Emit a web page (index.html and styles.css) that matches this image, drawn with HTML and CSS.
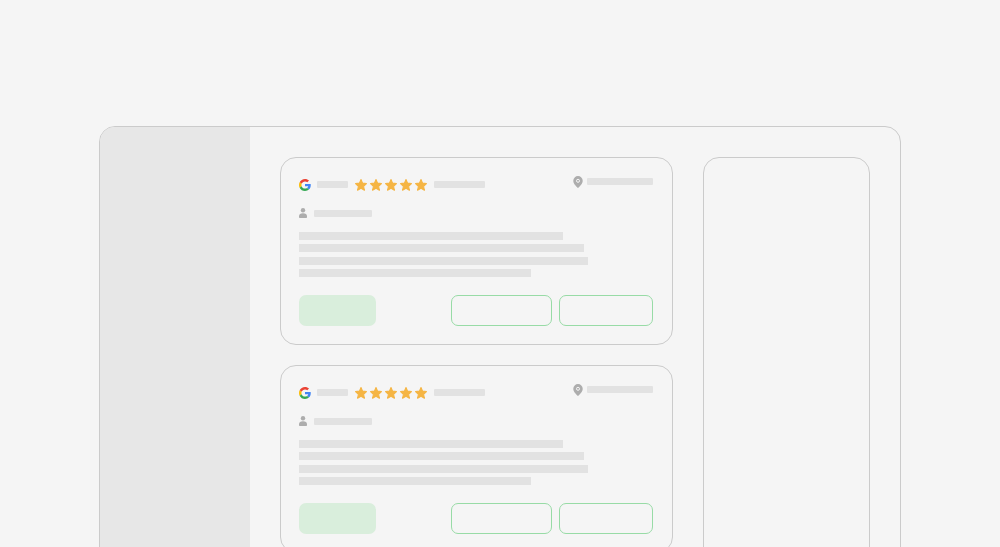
FILE: index.html
```html
<!DOCTYPE html>
<html lang="en">

<head>
    <title>Reviews</title>
    <meta charset="utf-8">
    <meta name="viewport" content="width=device-width, initial-scale=1.0">
    <link rel="stylesheet" href="styles.css">
</head>

<body>
    <svg class="symbols" aria-hidden="true">
        <symbol id="google" viewBox="0 0 48 48">
            <path fill="#ea4335" d="M24 9.5c3.54 0 6.71 1.22 9.21 3.6l6.85-6.85C35.9 2.38 30.47 0 24 0 14.62 0 6.51 5.38 2.56 13.22l7.98 6.19C12.43 13.72 17.74 9.5 24 9.5z" />
            <path fill="#4285f4" d="M46.98 24.55c0-1.57-.15-3.09-.38-4.55H24v9.02h12.94c-.58 2.96-2.26 5.48-4.78 7.18l7.73 6c4.51-4.18 7.09-10.36 7.09-17.65z" />
            <path fill="#fbbc05" d="M10.53 28.59c-.48-1.45-.76-2.99-.76-4.59s.27-3.14.76-4.59l-7.98-6.19C.92 16.46 0 20.12 0 24c0 3.88.92 7.54 2.56 10.78l7.97-6.19z" />
            <path fill="#34a853" d="M24 48c6.48 0 11.93-2.13 15.89-5.81l-7.73-6c-2.15 1.45-4.92 2.3-8.16 2.3-6.26 0-11.57-4.22-13.47-9.91l-7.98 6.19C6.51 42.62 14.62 48 24 48z" />
        </symbol>
        <symbol id="star" viewBox="0.500 0.500 23 23">
            <path fill="#f5b544" stroke="#f5b544" stroke-width="2" stroke-linejoin="round" d="M12 1.500l3.100 6.900 7.400.8-5.500 5.200 1.600 7.800-6.600-4-6.600 4L7 14.400 1.500 9.200l7.400-.8z" />
        </symbol>
        <symbol id="person" viewBox="0 0 8 10">
            <circle fill="#adadad" cx="4" cy="2.200" r="2.200" />
            <path fill="#adadad" d="M0 8.200C0 6.400 1.300 5.300 4 5.300s4 1.100 4 2.900V9c0 .6-.4 1-1 1H1c-.6 0-1-.4-1-1z" />
        </symbol>
        <symbol id="pin" viewBox="0 0 10 12">
            <path fill="#adadad" d="M5 0a4.700 4.700 0 0 0-4.700 4.700C.3 8 3.300 10.300 5 12c1.700-1.700 4.700-4 4.700-7.300A4.700 4.700 0 0 0 5 0z" />
            <circle fill="#adadad" stroke="#f5f5f5" cx="5" cy="4.800" r="1.500" />
        </symbol>
    </svg>

    <div class="window">
        <nav class="sidebar"></nav>
        <main class="content">
            <section class="reviews">
                <article class="card">
                    <header class="card-top">
                        <div class="source">
                            <svg class="google"><use href="#google" /></svg>
                            <span class="bar bar-name"></span>
                            <div class="stars">
                                <svg><use href="#star" /></svg>
                                <svg><use href="#star" /></svg>
                                <svg><use href="#star" /></svg>
                                <svg><use href="#star" /></svg>
                                <svg><use href="#star" /></svg>
                            </div>
                            <span class="bar bar-date"></span>
                        </div>
                        <div class="location">
                            <svg class="pin"><use href="#pin" /></svg>
                            <span class="bar bar-place"></span>
                        </div>
                    </header>
                    <div class="author">
                        <svg class="person"><use href="#person" /></svg>
                        <span class="bar bar-author"></span>
                    </div>
                    <div class="lines">
                        <span></span>
                        <span></span>
                        <span></span>
                        <span></span>
                    </div>
                    <footer class="actions">
                        <button class="primary" type="button" aria-label="Reply"></button>
                        <button class="outline wide" type="button" aria-label="Share"></button>
                        <button class="outline" type="button" aria-label="Assign"></button>
                    </footer>
                </article>

                <article class="card">
                    <header class="card-top">
                        <div class="source">
                            <svg class="google"><use href="#google" /></svg>
                            <span class="bar bar-name"></span>
                            <div class="stars">
                                <svg><use href="#star" /></svg>
                                <svg><use href="#star" /></svg>
                                <svg><use href="#star" /></svg>
                                <svg><use href="#star" /></svg>
                                <svg><use href="#star" /></svg>
                            </div>
                            <span class="bar bar-date"></span>
                        </div>
                        <div class="location">
                            <svg class="pin"><use href="#pin" /></svg>
                            <span class="bar bar-place"></span>
                        </div>
                    </header>
                    <div class="author">
                        <svg class="person"><use href="#person" /></svg>
                        <span class="bar bar-author"></span>
                    </div>
                    <div class="lines">
                        <span></span>
                        <span></span>
                        <span></span>
                        <span></span>
                    </div>
                    <footer class="actions">
                        <button class="primary" type="button" aria-label="Reply"></button>
                        <button class="outline wide" type="button" aria-label="Share"></button>
                        <button class="outline" type="button" aria-label="Assign"></button>
                    </footer>
                </article>
            </section>
            <aside class="details"></aside>
        </main>
    </div>
</body>

</html>
```
FILE: styles.css
```css
* {
    box-sizing: border-box;
}

body {
    height: 100vh;
    margin: 0;
    padding: 126px 99px 0;
    overflow: hidden;
    background: #f5f5f5;
    font-family: "Liberation Sans", sans-serif;
}

svg {
    display: block;
    flex: none;
}

.symbols {
    display: none;
}

.window {
    display: grid;
    grid-template-columns: 150px 1fr;
    border: 1px solid #cbcbcb;
    border-radius: 16px;
    overflow: hidden;
}

.sidebar {
    background: #e7e7e7;
}

.content {
    display: grid;
    grid-template-columns: 393fr 167fr;
    gap: 30px;
    padding: 30px;
}

.reviews {
    display: grid;
    align-content: start;
    gap: 20px;
}

.card,
.details {
    border: 1px solid #cbcbcb;
    border-radius: 16px;
}

.details {
    min-height: 100vh;
}

.card {
    padding: 18px 19px 18px 18px;
}

.card-top {
    display: flex;
    justify-content: space-between;
    height: 15px;
}

.source,
.location,
.author {
    display: flex;
    align-items: center;
}

.source {
    height: 15px;
    padding-top: 2px;
    gap: 6px;
}

.location {
    height: 11px;
    gap: 4px;
}

.google {
    width: 12px;
    height: 12px;
}

.stars {
    display: flex;
    gap: 3px;
    margin: 0 1px;
}

.stars svg {
    width: 12px;
    height: 12px;
}

.pin {
    width: 10px;
    height: 12px;
}

.person {
    width: 8px;
    height: 10px;
}

.bar {
    height: 7px;
    border-radius: 1px;
    background: #e2e2e2;
}

.bar-name {
    width: 31px;
}

.bar-date {
    width: 51px;
}

.bar-place {
    width: 66px;
}

.bar-author {
    width: 58px;
}

.author {
    gap: 7px;
    margin-top: 17px;
}

.lines {
    display: flex;
    flex-direction: column;
    justify-content: space-between;
    height: 45px;
    margin: 14px 0 18px;
}

.lines span {
    width: 264px;
    max-width: 100%;
    height: 8px;
    background: #e2e2e2;
}

.lines span:nth-child(2) {
    width: 285px;
}

.lines span:nth-child(3) {
    width: 289px;
}

.lines span:nth-child(4) {
    width: 232px;
}

.actions {
    display: flex;
    gap: 7px;
}

button {
    height: 31px;
    padding: 0;
    border: 0;
    border-radius: 7px;
    background: none;
}

.primary {
    width: 77px;
    margin-right: auto;
    background: #d9eedc;
}

.outline {
    width: 94px;
    border: 1px solid #98dba6;
}

.wide {
    width: 101px;
}
```
